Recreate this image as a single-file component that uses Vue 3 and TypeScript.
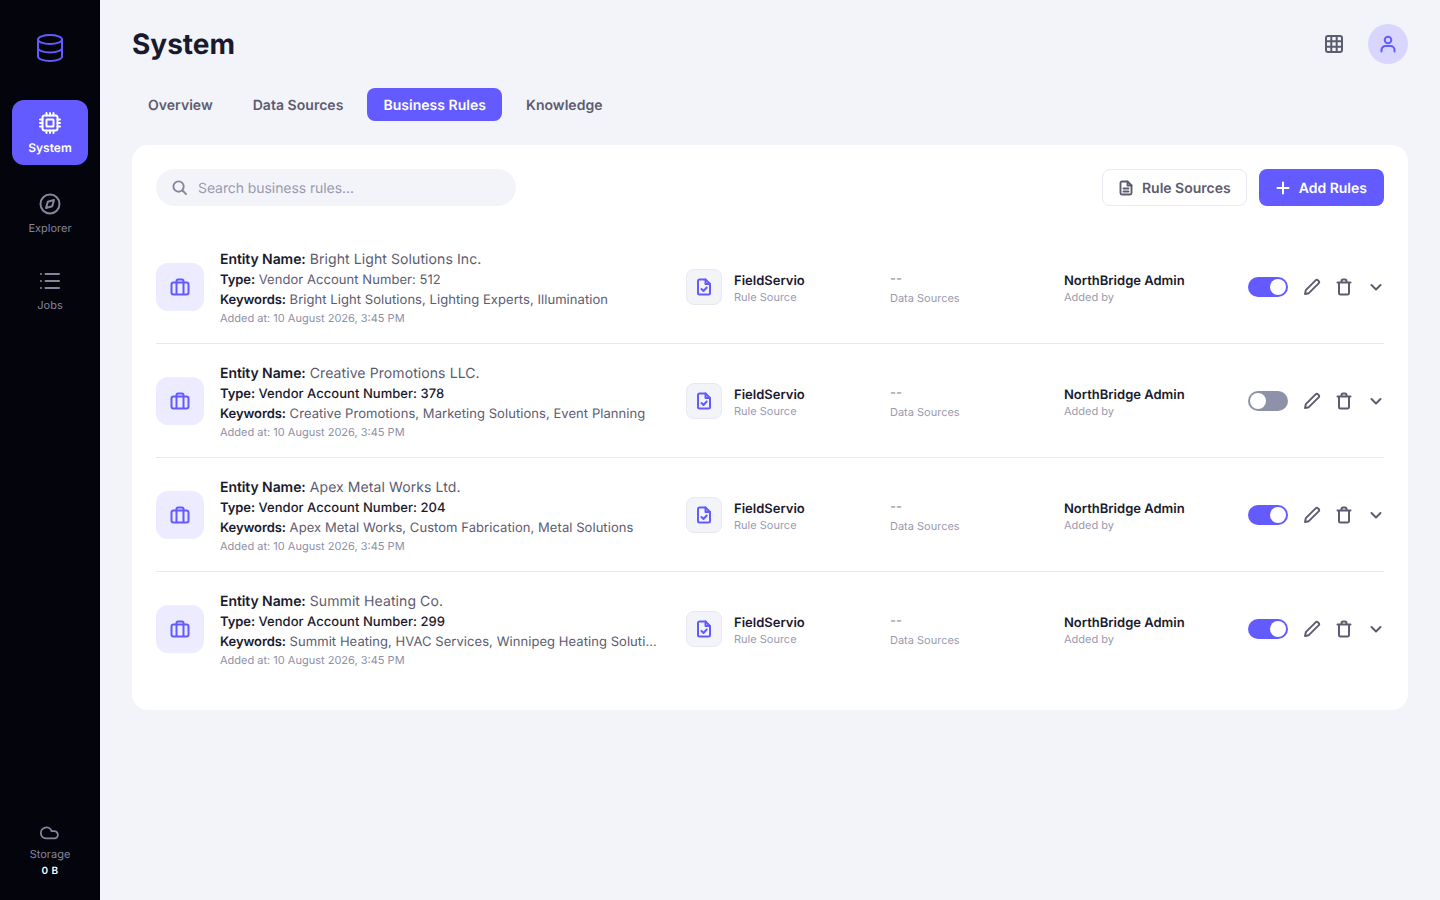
<script setup lang="ts">
const tabs: { id: number; label: string; active?: boolean }[] = [
  { id: 1, label: "Overview" },
  { id: 2, label: "Data Sources" },
  { id: 3, label: "Business Rules", active: true },
  { id: 4, label: "Knowledge" },
];

const rules: { id: number; entity: string; account: number; keywords: string; on: boolean; boldType?: boolean }[] = [
  { id: 1, entity: "Bright Light Solutions Inc.", account: 512, keywords: "Bright Light Solutions, Lighting Experts, Illumination", on: true },
  { id: 2, entity: "Creative Promotions LLC.", account: 378, keywords: "Creative Promotions, Marketing Solutions, Event Planning", on: false, boldType: true },
  { id: 3, entity: "Apex Metal Works Ltd.", account: 204, keywords: "Apex Metal Works, Custom Fabrication, Metal Solutions", on: true, boldType: true },
  { id: 4, entity: "Summit Heating Co.", account: 299, keywords: "Summit Heating, HVAC Services, Winnipeg Heating Solutions, Furnace Repair", on: true, boldType: true },
];
</script>

<template>
  <div class="app">
    <aside class="sidebar">
      <div class="logo">
        <svg width="32" height="32" viewBox="0 0 32 32" fill="none" stroke="#635bff" stroke-width="2" stroke-linecap="round" stroke-linejoin="round">
          <ellipse cx="16" cy="7.5" rx="12" ry="4.5" />
          <path d="M4 7.5v17c0 2.5 5.4 4.5 12 4.5s12-2 12-4.5v-17" />
          <path d="M4 16c0 2.5 5.4 4.5 12 4.5s12-2 12-4.5" />
        </svg>
      </div>
      <nav class="nav">
        <a class="nav_item is_active">
          <svg width="24" height="24" viewBox="0 0 24 24" fill="none" stroke="currentColor" stroke-width="2" stroke-linecap="round" stroke-linejoin="round">
            <rect x="4.5" y="4.5" width="15" height="15" rx="2" />
            <rect x="8.5" y="8.5" width="7" height="7" rx="0.5" />
            <path d="M8.5 2v2.5M12 2v2.5M15.5 2v2.5M8.5 19.5V22M12 19.5V22M15.5 19.5V22M2 8.5h2.5M2 12h2.5M2 15.5h2.5M19.5 8.5H22M19.5 12H22M19.5 15.5H22" />
          </svg>
          <span>System</span>
        </a>
        <a class="nav_item">
          <svg width="24" height="24" viewBox="0 0 24 24" fill="none" stroke="currentColor" stroke-width="2" stroke-linecap="round" stroke-linejoin="round">
            <circle cx="12" cy="12" r="9.5" />
            <path d="M16 8l-1.8 6.2L8 16l1.8-6.2z" />
          </svg>
          <span>Explorer</span>
        </a>
        <a class="nav_item">
          <svg width="24" height="24" viewBox="0 0 24 24" fill="none" stroke="currentColor" stroke-width="2" stroke-linecap="round" stroke-linejoin="round">
            <path d="M7.5 5H21M7.5 12H21M7.5 19H21M3 5h.01M3 12h.01M3 19h.01" />
          </svg>
          <span>Jobs</span>
        </a>
      </nav>
      <div class="storage">
        <svg width="22" height="22" viewBox="0 0 24 24" fill="none" stroke="currentColor" stroke-width="2" stroke-linecap="round" stroke-linejoin="round">
          <path d="M17.5 19H8a6 6 0 1 1 5.7-7.9h1.8a4 4 0 0 1 2 7.9z" />
        </svg>
        <span>Storage</span>
        <strong>0 B</strong>
      </div>
    </aside>

    <main class="main">
      <header class="top">
        <h1>System</h1>
        <div class="top_right">
          <svg class="grid_icon" width="20" height="20" viewBox="0 0 20 20" fill="none" stroke="#5c5c70" stroke-width="2">
            <rect x="2" y="2" width="16" height="16" rx="2" />
            <path d="M7.3 2v16M12.7 2v16M2 7.3h16M2 12.7h16" />
          </svg>
          <div class="avatar">
            <svg width="20" height="20" viewBox="0 0 20 20" fill="none" stroke="#635bff" stroke-width="2" stroke-linecap="round">
              <circle cx="10" cy="6" r="3.3" />
              <path d="M3.5 17.5V16a4 4 0 0 1 4-4h5a4 4 0 0 1 4 4v1.5" />
            </svg>
          </div>
        </div>
      </header>

      <div class="tabs">
        <button v-for="t in tabs" :key="t.id" class="tab" :class="{ is_active: t.active }">{{ t.label }}</button>
      </div>

      <section class="card">
        <div class="toolbar">
          <div class="search">
            <svg width="15" height="15" viewBox="0 0 16 16" fill="none" stroke="#85859c" stroke-width="2" stroke-linecap="round">
              <circle cx="7" cy="7" r="5.5" />
              <path d="M11.2 11.2L15 15" />
            </svg>
            <span class="search_text">Search business rules...</span>
          </div>
          <div class="toolbar_btns">
            <button class="btn btn_light">
              <svg width="16" height="16" viewBox="0 0 16 16" fill="none" stroke="#5c5c70" stroke-width="1.9" stroke-linejoin="round" stroke-linecap="round">
                <path d="M9.5 1.5H4A1.5 1.5 0 0 0 2.5 3v10A1.5 1.5 0 0 0 4 14.5h8a1.5 1.5 0 0 0 1.5-1.5V5.5z" />
                <path d="M9.5 1.5v4h4M5.5 8.5h5M5.5 11.5h5" />
              </svg>
              <span class="btn_label">Rule Sources</span>
            </button>
            <button class="btn btn_primary">
              <svg width="16" height="16" viewBox="0 0 16 16" fill="none" stroke="#fff" stroke-width="2" stroke-linecap="round">
                <path d="M8 2.5v11M2.5 8h11" />
              </svg>
              <span class="btn_label">Add Rules</span>
            </button>
          </div>
        </div>

        <div class="rows">
          <div v-for="r in rules" :key="r.id" class="row">
            <div class="brief">
              <svg width="20" height="20" viewBox="0 0 20 20" fill="none" stroke="#635bff" stroke-width="2" stroke-linejoin="round">
                <rect x="1.5" y="5.5" width="17" height="12" rx="2" />
                <path d="M6.5 5.5v12M13.5 5.5v12M6.5 5.5V4A1.5 1.5 0 0 1 8 2.5h4A1.5 1.5 0 0 1 13.5 4v1.5" />
              </svg>
            </div>
            <div class="info">
              <p class="line line_entity"><b>Entity Name:</b> {{ r.entity }}</p>
              <p class="line" :class="{ strong_type: r.boldType }"><b>Type:</b> Vendor Account Number: {{ r.account }}</p>
              <p class="line"><b>Keywords:</b> {{ r.keywords }}</p>
              <p class="meta">Added at: 10 August 2026, 3:45 PM</p>
            </div>
            <div class="col col_source">
              <div class="doc">
                <svg width="18" height="18" viewBox="0 0 18 18" fill="none" stroke="#635bff" stroke-width="2" stroke-linecap="round" stroke-linejoin="round">
                  <path d="M10.5 1.5h-6A1.5 1.5 0 0 0 3 3v12a1.5 1.5 0 0 0 1.5 1.5h9A1.5 1.5 0 0 0 15 15V6z" />
                  <path d="M10.5 1.5V6H15M6.5 11l2 2 3.2-3.5" />
                </svg>
              </div>
              <div class="stack">
                <span class="name">FieldServio</span>
                <span class="sub">Rule Source</span>
              </div>
            </div>
            <div class="col col_data stack_data">
              <span class="dash">--</span>
              <span class="sub">Data Sources</span>
            </div>
            <div class="col col_added stack">
              <span class="name">NorthBridge Admin</span>
              <span class="sub">Added by</span>
            </div>
            <div class="actions">
              <span class="toggle" :class="{ is_on: r.on }"><i /></span>
              <svg width="18" height="18" viewBox="0 0 18 18" fill="none" stroke="#5c5c70" stroke-width="1.9" stroke-linecap="round" stroke-linejoin="round">
                <path d="M2 16l.8-3.8 9.8-9.8a1.7 1.7 0 0 1 2.400 0l.6.6a1.7 1.7 0 0 1 0 2.400l-9.800 9.800z" />
              </svg>
              <svg width="18" height="18" viewBox="0 0 18 18" fill="none" stroke="#5c5c70" stroke-width="2" stroke-linecap="round" stroke-linejoin="round">
                <path d="M2.5 4.5h13M4 4.5V15a1.5 1.5 0 0 0 1.5 1.5h7A1.5 1.5 0 0 0 14 15V4.5M6.500 4.500V3A1.500 1.500 0 0 1 8 1.500h2A1.500 1.500 0 0 1 11.500 3v1.500" />
              </svg>
              <svg width="18" height="18" viewBox="0 0 18 18" fill="none" stroke="#5c5c70" stroke-width="2" stroke-linecap="round" stroke-linejoin="round">
                <path d="M4.5 7L9 11.5 13.5 7" />
              </svg>
            </div>
          </div>
        </div>
      </section>
    </main>
  </div>
</template>

<style>
html,
body {
  margin: 0;
  background: #f3f4f9;
}
</style>

<style scoped>
.app {
  display: flex;
  min-height: 900px;
  font-family: "Inter", "Liberation Sans", sans-serif;
  text-rendering: geometricPrecision;
  color: #1a1a2e;
  background: #f3f4f9;
}

.sidebar {
  width: 100px;
  flex: none;
  box-sizing: border-box;
  display: flex;
  flex-direction: column;
  align-items: center;
  background: #04040c;
  padding: 32px 12px 21px;
}

.logo {
  height: 32px;
  margin-bottom: 36px;
}

.nav {
  width: 100%;
  display: flex;
  flex-direction: column;
  gap: 16px;
  flex: 1;
}

.nav_item {
  height: 61px;
  box-sizing: border-box;
  padding-top: 11px;
  border-radius: 12px;
  display: flex;
  flex-direction: column;
  align-items: center;
  gap: 4px;
  color: #85859c;
  font-size: 11px;
  line-height: 16px;
}

.nav_item.is_active {
  height: 65px;
  gap: 5px;
  background: #635bff;
  color: #fff;
  font-size: 12px;
  font-weight: 600;
}

.storage {
  display: flex;
  flex-direction: column;
  align-items: center;
  color: #85859c;
  font-size: 11px;
  line-height: 16px;
}

.storage span {
  margin-top: 3px;
}

.storage strong {
  color: #fff;
  font-size: 10px;
  font-weight: 600;
  letter-spacing: 0.5px;
  margin-top: 1px;
}

.main {
  flex: 1;
  min-width: 0;
  padding: 24px 32px 0;
}

.top {
  height: 40px;
  display: flex;
  align-items: center;
  justify-content: space-between;
}

h1 {
  margin: 0;
  font-size: 28px;
  line-height: 40px;
  font-weight: 700;
}

.top_right {
  display: flex;
  align-items: center;
  gap: 24px;
}

.grid_icon {
  display: block;
}

.avatar {
  width: 40px;
  height: 40px;
  border-radius: 50%;
  background: #d8d6ff;
  display: flex;
  align-items: center;
  justify-content: center;
}

.tabs {
  display: flex;
  gap: 8px;
  margin-top: 24px;
}

.tab {
  height: 33px;
  padding: 2px 16px 0;
  border: 0;
  border-radius: 8px;
  background: transparent;
  color: #5c5c70;
  font: 600 14px "Inter", sans-serif;
  letter-spacing: 0.03px;
  text-rendering: geometricPrecision;
}

.tab.is_active {
  background: #635bff;
  color: #fff;
}

.card {
  margin-top: 24px;
  background: #fff;
  border-radius: 16px;
  padding: 24px;
}

.toolbar {
  display: flex;
  align-items: center;
  justify-content: space-between;
  margin-bottom: 24px;
}

.search {
  width: 360px;
  height: 37px;
  box-sizing: border-box;
  padding: 0 16px;
  border-radius: 19px;
  background: #f3f4f9;
  display: flex;
  align-items: center;
  gap: 11px;
  color: #9a9ab0;
  font-size: 14px;
}

.search_text {
  padding-top: 2px;
  letter-spacing: -0.08px;
}

.toolbar_btns {
  display: flex;
  gap: 12px;
}

.btn {
  height: 37px;
  box-sizing: border-box;
  display: flex;
  align-items: center;
  gap: 8px;
  border-radius: 8px;
  font: 600 14px "Inter", sans-serif;
  text-rendering: geometricPrecision;
}

.btn_label {
  padding-top: 2px;
}

.btn_light {
  padding: 0 15px;
  background: #fff;
  border: 1px solid #e8e9f0;
  color: #5c5c70;
}

.btn_primary {
  padding: 0 17px 0 16px;
  background: #635bff;
  border: 0;
  color: #fff;
}

.row {
  height: 114px;
  box-sizing: border-box;
  display: flex;
  align-items: center;
  border-bottom: 1px solid #e8e9f0;
}

.row:last-child {
  border-bottom-color: transparent;
}

.brief {
  width: 48px;
  height: 48px;
  flex: none;
  border-radius: 12px;
  background: #ecebff;
  display: flex;
  align-items: center;
  justify-content: center;
  margin-right: 16px;
}

.info {
  width: 438px;
  flex: none;
  margin-right: 28px;
  padding: 5px 0 2px;
}

.line {
  margin: 0;
  font-size: 13px;
  line-height: 20px;
  letter-spacing: 0.06px;
  color: #5c5c70;
  white-space: nowrap;
  overflow: hidden;
  text-overflow: ellipsis;
}

.line_entity {
  font-size: 14px;
  letter-spacing: 0.09px;
}

.line b {
  font-weight: 600;
  letter-spacing: -0.08px;
  color: #1a1a2e;
}

.strong_type {
  color: #1a1a2e;
  font-weight: 500;
  letter-spacing: 0.04px;
}

.meta {
  margin: 0;
  font-size: 11px;
  line-height: 16px;
  color: #8f8fa5;
}

.col {
  flex: none;
}

.col_source {
  width: 204px;
  display: flex;
  align-items: center;
  gap: 12px;
}

.col_data {
  width: 174px;
}

.col_added {
  width: 184px;
}

.doc {
  width: 36px;
  height: 36px;
  box-sizing: border-box;
  border-radius: 8px;
  border: 1px solid #e8e9f0;
  background: #f3f4f9;
  display: flex;
  align-items: center;
  justify-content: center;
}

.stack {
  display: flex;
  flex-direction: column;
  padding-top: 5px;
}

.stack_data {
  display: flex;
  flex-direction: column;
  gap: 2px;
  padding-top: 3px;
}

.name {
  font-size: 13px;
  line-height: 16px;
  font-weight: 600;
  color: #1a1a2e;
}

.sub {
  font-size: 11px;
  line-height: 16px;
  color: #9a9ab0;
}

.dash {
  font-size: 13px;
  line-height: 18px;
  color: #85859c;
}

.actions {
  flex: none;
  display: flex;
  align-items: center;
  gap: 14px;
}

.actions svg {
  display: block;
  flex: none;
}

.toggle {
  width: 40px;
  height: 20px;
  box-sizing: border-box;
  border-radius: 10px;
  padding: 2px;
  margin-right: 1px;
  display: flex;
  background: #8e92a8;
}

.toggle i {
  width: 16px;
  height: 16px;
  border-radius: 50%;
  background: #fff;
}

.toggle.is_on {
  background: #635bff;
  justify-content: flex-end;
}
</style>
